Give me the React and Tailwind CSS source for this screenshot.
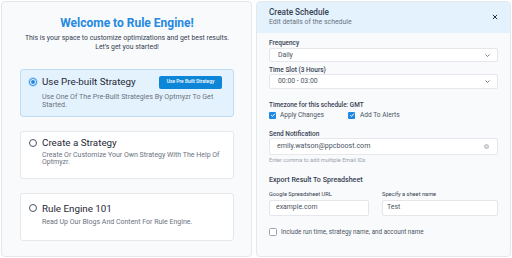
import React from "react";

const font = { fontFamily: "Roboto, 'Noto Sans', sans-serif" };

function Radio({ checked }) {
  if (checked) {
    return (
      <span className="flex h-[8px] w-[8px] shrink-0 items-center justify-center rounded-full border border-[#1e88e5] bg-white ring-1 ring-[#bbdefb]">
        <span className="h-[4px] w-[4px] rounded-full bg-[#1e88e5]" />
      </span>
    );
  }
  return <span className="h-[8px] w-[8px] shrink-0 rounded-full border border-[#4b5563] bg-white" />;
}

function Check({ checked }) {
  if (checked) {
    return (
      <span className="flex h-[7px] w-[7px] shrink-0 items-center justify-center rounded-[1px] bg-[#1e88e5]">
        <svg viewBox="0 0 10 10" className="h-[6px] w-[6px]">
          <path d="M2 5.2 L4.2 7.3 L8.2 2.8" stroke="white" strokeWidth="1.6" fill="none" />
        </svg>
      </span>
    );
  }
  return <span className="h-[8px] w-[8px] shrink-0 rounded-[1.5px] border border-[#9ca3af] bg-white" />;
}

function Chevron() {
  return (
    <svg viewBox="0 0 10 6" className="h-[3px] w-[5px]">
      <path d="M1 1 L5 5 L9 1" stroke="#4b5563" strokeWidth="1.5" fill="none" />
    </svg>
  );
}

export default function App() {
  return (
    <div className="flex h-[258px] w-[512px] gap-[4px] bg-white p-[1px]" style={font}>
      {/* Left panel */}
      <div className="flex w-[251px] flex-col rounded-[4px] border border-[#e5e7eb] bg-[#f8fafc] pl-[18px] pr-[17px] pt-[14px]">
        <h1 className="text-center text-[12px] font-bold leading-[14px] text-[#2589e0]">Welcome to Rule Engine!</h1>
        <p className="mt-[4px] text-center text-[6.9px] leading-[9px] text-[#374151]">
          This is your space to customize optimizations and get best results.
          <br />
          Let’s get you started!
        </p>

        <div className="mt-[17px] h-[48px] rounded-[3px] border border-[#bfdcf5] bg-[#e3f2fd] pl-[8px] pr-[11px] pt-[5px]">
          <div className="flex h-[14px] items-center gap-[5px]">
            <Radio checked />
            <span className="text-[9.8px] font-normal leading-[14px] text-[#1f2937]">Use Pre-built Strategy</span>
            <div className="flex-1" />
            <button className="flex h-[13px] w-[63px] items-center justify-center rounded-[2px] bg-[#0e86d8] text-[4.9px] font-medium text-white">
              Use Pre Built Strategy
            </button>
          </div>
          <div className="mt-[4px] pl-[13px] text-[7.1px] leading-[7.5px] text-[#6b7280]">
            Use One Of The Pre-Built Strategies By Optmyzr To Get
            <br />
            Started.
          </div>
        </div>

        <div className="mt-[14px] h-[48px] rounded-[3px] border border-[#e5e7eb] bg-white pl-[8px] pr-[11px] pt-[4px]">
          <div className="flex h-[13px] items-center gap-[5px]">
            <Radio />
            <span className="text-[9.8px] font-normal leading-[13px] text-[#1f2937]">Create a Strategy</span>
          </div>
          <div className="mt-[2.5px] pl-[13px] text-[7px] leading-[7px] text-[#6b7280]">
            Create Or Customize Your Own Strategy With The Help Of
            <br />
            Optmyzr.
          </div>
        </div>

        <div className="mt-[14px] h-[48px] rounded-[3px] border border-[#e5e7eb] bg-white pl-[8px] pr-[11px] pt-[7.5px]">
          <div className="flex h-[13px] items-center gap-[5px]">
            <Radio />
            <span className="text-[9.8px] font-normal leading-[13px] text-[#1f2937]">Rule Engine 101</span>
          </div>
          <div className="mt-[4px] pl-[13px] text-[7px] leading-[7px] text-[#6b7280]">
            Read Up Our Blogs And Content For Rule Engine.
          </div>
        </div>
      </div>

      {/* Right panel */}
      <div className="flex flex-1 flex-col overflow-hidden rounded-[4px] border border-[#e5e7eb] bg-[#f8fafc]">
        <div className="flex h-[31px] items-center justify-between bg-[#e3f2fd] pb-[1.5px] pl-[12px] pr-[12px]">
          <div className="flex flex-col">
            <span className="text-[8.2px] font-medium leading-[10px] text-[#374151]">Create Schedule</span>
            <span className="text-[6.9px] leading-[10px] text-[#6b7280]">Edit details of the schedule</span>
          </div>
          <svg viewBox="0 0 10 10" className="h-[6px] w-[6px]">
            <path d="M1.5 1.5 L8.5 8.5 M8.5 1.5 L1.5 8.5" stroke="#1f2937" strokeWidth="1.6" />
          </svg>
        </div>
        <div className="flex flex-col pl-[12px] pr-[12px]">
          <span className="mt-[6px] text-[6.5px] font-medium leading-[8px] text-[#374151]">Frequency</span>
          <div className="mt-[1px] flex h-[14px] items-center justify-between rounded-[2px] border border-[#e5e7eb] bg-white pl-[8px] pr-[7px]">
            <span className="text-[6.9px] text-[#4b5563]">Daily</span>
            <Chevron />
          </div>
          <span className="mt-[4px] text-[6.5px] font-medium leading-[8px] text-[#374151]">Time Slot (3 Hours)</span>
          <div className="flex h-[14.5px] items-center justify-between rounded-[2px] border border-[#e5e7eb] bg-white pl-[8px] pr-[7px]">
            <span className="text-[6.9px] text-[#4b5563]">00:00 - 03:00</span>
            <Chevron />
          </div>
          <span className="mt-[12px] text-[6.4px] font-medium leading-[8px] text-[#374151]">Timezone for this schedule: GMT</span>
          <div className="mt-[2.5px] flex h-[8px] items-center">
            <div className="flex w-[79px] items-center gap-[4px]">
              <Check checked />
              <span className="text-[6.6px] leading-[8px] text-[#4b5563]">Apply Changes</span>
            </div>
            <div className="flex items-center gap-[5px]">
              <Check checked />
              <span className="text-[6.6px] leading-[8px] text-[#4b5563]">Add To Alerts</span>
            </div>
          </div>
          <span className="mt-[11px] text-[6.5px] font-medium leading-[8px] text-[#374151]">Send Notification</span>
          <div className="flex h-[16.5px] items-center justify-between rounded-[2px] border border-[#e5e7eb] bg-white pl-[7px] pr-[8px]">
            <span className="text-[7.1px] text-[#4b5563]">emily.watson@ppcboost.com</span>
            <span className="flex h-[5.5px] w-[5.5px] items-center justify-center rounded-full bg-[#c4c8ce]">
              <svg viewBox="0 0 10 10" className="h-[3px] w-[3px]">
                <path d="M2 2 L8 8 M8 2 L2 8" stroke="white" strokeWidth="2" />
              </svg>
            </span>
          </div>
          <span className="mt-[2px] text-[5.6px] leading-[6px] text-[#9ca3af]">Enter comma to add multiple Email IDs</span>
          <span className="mt-[12px] text-[7.1px] font-medium leading-[9px] text-[#374151]">Export Result To Spreadsheet</span>
          <div className="mt-[7px] flex gap-[13px]">
            <div className="flex w-[100px] flex-col">
              <span className="text-[5.7px] leading-[7px] text-[#374151]">Google Spreadsheet URL</span>
              <div className="mt-[2px] flex h-[16px] items-center rounded-[2px] border border-[#e5e7eb] bg-white pl-[6px]">
                <span className="text-[6.9px] text-[#4b5563]">example.com</span>
              </div>
            </div>
            <div className="flex w-[116px] flex-col">
              <span className="text-[5.7px] leading-[7px] text-[#374151]">Specify a sheet name</span>
              <div className="mt-[2px] flex h-[16px] items-center rounded-[2px] border border-[#e5e7eb] bg-white pl-[4px]">
                <span className="text-[6.9px] text-[#4b5563]">Test</span>
              </div>
            </div>
          </div>
          <div className="mt-[12.5px] flex h-[8px] items-center gap-[4px]">
            <Check />
            <span className="text-[6.3px] leading-[8px] text-[#4b5563]">Include run time, strategy name, and account name</span>
          </div>
        </div>
      </div>
    </div>
  );
}
